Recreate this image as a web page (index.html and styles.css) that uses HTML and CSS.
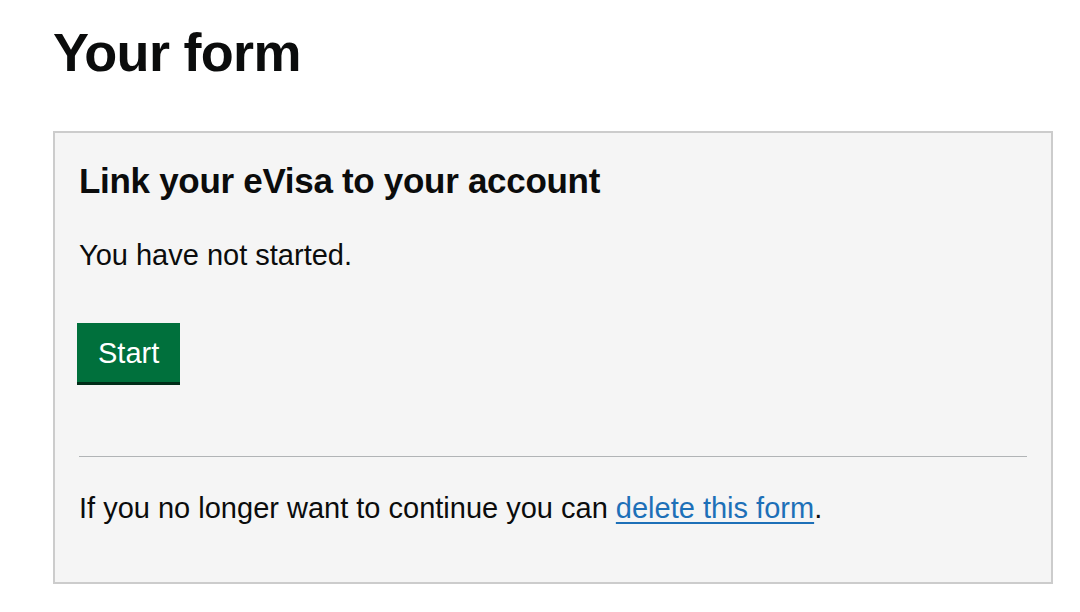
FILE: index.html
```html
<!DOCTYPE html>
<html lang="en">
<head>
<meta charset="utf-8">
<title>Your form</title>
<link rel="stylesheet" href="styles.css">
</head>
<body>
<main class="page">
  <h1 class="page-title">Your form</h1>
  <section class="panel">
    <h2 class="panel-title">Link your eVisa to your account</h2>
    <p class="body-text status">You have not started.</p>
    <button class="btn-start" type="button">Start</button>
    <hr class="divider">
    <p class="body-text footer-text">If you no longer want to continue you can <a class="link" href="#">delete this form</a>.</p>
  </section>
</main>
</body>
</html>
```

FILE: styles.css
```css
* { box-sizing: border-box; }
html, body { margin: 0; padding: 0; background: #ffffff; }
body {
  font-family: "Liberation Sans", Arial, sans-serif;
  color: #0b0c0c;
}
.page {
  padding: 0 27px 0 53px;
}
.page-title {
  margin: 21px 0 0 0;
  font-size: 54px;
  font-weight: 700;
  letter-spacing: -0.7px;
  line-height: normal;
}
.panel {
  margin-top: 48px;
  background: #f5f5f5;
  border: 2px solid #cccccc;
  padding: 28px 24px 57px 24px;
}
.panel-title {
  margin: 0;
  font-size: 35px;
  font-weight: 700;
  letter-spacing: -0.3px;
  line-height: normal;
}
.body-text {
  margin: 0;
  font-size: 29px;
  line-height: normal;
  color: #0b0c0c;
}
.status { margin-top: 38px; }
.btn-start {
  display: block;
  margin: 51px 0 0 -2px;
  background: #00703c;
  color: #ffffff;
  border: 0;
  border-radius: 0;
  font-family: "Liberation Sans", Arial, sans-serif;
  font-size: 29px;
  line-height: 1;
  padding: 16px 21px 14px 21px;
  box-shadow: 0 3px 0 #002d18;
  cursor: pointer;
}
.divider {
  margin: 74px 0 0 0;
  border: 0;
  border-top: 1px solid #b1b4b6;
  height: 0;
}
.footer-text { margin-top: 35px; }
.link {
  color: #1d70b8;
  text-decoration: underline;
  text-decoration-thickness: 2px;
  text-underline-offset: 4px;
}
```
